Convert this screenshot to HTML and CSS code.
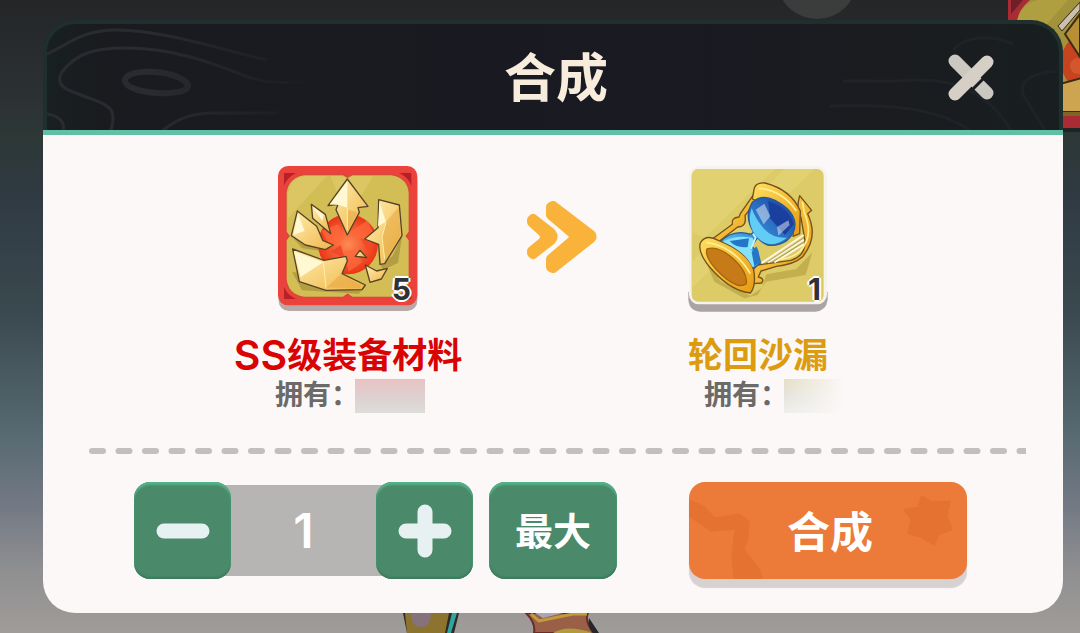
FILE: index.html
```html
<!DOCTYPE html>
<html lang="zh-CN">

<head>
    <meta charset="UTF-8">
    <meta name="viewport" content="width=device-width, initial-scale=1.0">
    <title>合成</title>
    <link rel="stylesheet" href="styles.css">
</head>

<body>
    <!-- Fondo del juego -->
    <div class="scene" aria-hidden="true">
        <div class="scene-lamp"></div>
        <svg class="scene-card" width="72" height="132" viewBox="0 0 72 132">
            <path fill="#1d2425" d="M0 0h72v132H0z" />
            <path fill="#a92b34" d="M0 0h72v128H0z" />
            <path fill="#6f1f27" d="M3 0h12L3 14z" />
            <path fill="#a3923c" d="M72 0H22Q10 10 9 22v84q8 8 20 10h43z" />
            <path fill="#b09f40" d="M9 22Q12 4 30 0h30L34 30z" />
            <circle cx="84" cy="62" r="31" fill="#c5431f" />
            <circle cx="70" cy="66" r="8" fill="#d4562c" />
            <path fill="#b98f35" stroke="#3b2a14" stroke-width="2" d="M57 34 72 14v43z" />
            <path fill="#c9c0b2" stroke="#3b2a14" stroke-width="1" d="M72 2 50 26l4 5L72 10z" />
            <path fill="#cda550" stroke="#3b2a14" stroke-width="2" d="M74 78 30 90l20 22h24z" />
            <path fill="#7d6526" d="M50 112h22v4H50z" />
        </svg>
        <svg class="scene-hero" width="200" height="20" viewBox="0 0 200 20">
            <path fill="#302b1e" d="M0 0h56l-5 20H4z" />
            <path fill="#8c7430" d="M2 0h44l-4 20H4z" />
            <path fill="#85727a" d="M8 0h20q0 14-10 14T8 0z" />
            <path fill="#2fa6a3" d="M49 0h5l-6 20h-4z" />
            <path fill="#9a6047" stroke="#6b2c26" stroke-width="2" d="M123 0h62q-4 8 6 20h-60q2-10-8-20z" />
            <path fill="#aaa6b9" d="M132 0h28l-20 5z" />
            <path fill="none" stroke="#c09b3c" stroke-width="3" d="m128 1 8 7 34-7h14" />
            <path fill="#b39a3d" d="M150 20q14-9 40 0z" />
            <path fill="#24262b" d="M186 5l10 15h-6q-6-6-4-15z" />
        </svg>
    </div>

    <main class="dialog">
        <header class="dialog-header">
            <svg class="contour contour-left" width="310" height="106" viewBox="0 0 310 106" aria-hidden="true">
                <defs>
                    <linearGradient id="fade" gradientUnits="userSpaceOnUse" x1="100" y1="0" x2="260" y2="0">
                        <stop offset="0" stop-color="#292b30" />
                        <stop offset="1" stop-color="#1b1c20" />
                    </linearGradient>
                </defs>
                <g fill="none" stroke="url(#fade)" stroke-width="3">
                    <path d="M0 30C22 20 34 6 70 6c42 0 92 16 150 30" />
                    <path d="M64 106c8-26-8-26-30-35C24 67 6 63 15 48 30 28 50 24 78 24c46 0 82 13 118 27 20 8 36 8 60 7" />
                    <path d="M0 90c12 2 18 8 16 16M116 106c16-12 30-18 56-17h60" />
                    <path stroke-width="6" d="M78 56c2-13 56-10 63 5 2 13-64 10-63-5z" />
                </g>
            </svg>
            <svg class="contour contour-right" width="240" height="106" viewBox="0 0 240 106" aria-hidden="true">
                <g fill="none" stroke="#1f2226" stroke-width="3">
                    <path d="M24 57h56c60-6 90 14 112 49M10 82c60-2 110 2 140 24" />
                    <path d="M134 26c12-14 36-16 60-6M238 47c-30 2-42 14-30 30l18 29" />
                </g>
            </svg>
            <h1>合成</h1>
            <button type="button" class="close" aria-label="关闭">
                <svg width="48" height="50" viewBox="0 0 48 50">
                    <g stroke-width="13" stroke-linecap="round">
                        <path stroke="#cbc7c1" d="M8 7l32 32" />
                        <path stroke="#1a1b20" stroke-width="3" stroke-linecap="butt" d="M25 36l12-12" />
                        <path stroke="#d5cfc6" d="M40 8 8 40" />
                    </g>
                </svg>
            </button>
        </header>

        <div class="dialog-body">
            <section class="recipe">
                <div class="item">
                    <div class="item-card">
                        <svg width="142" height="148" viewBox="39 30 426 444" aria-hidden="true">
                            <defs>
                                <linearGradient id="gold" x1="0" y1="0" x2="1" y2="1">
                                    <stop offset="0" stop-color="#fff0b0" />
                                    <stop offset="1" stop-color="#f0b54a" />
                                </linearGradient>
                                <radialGradient id="gem">
                                    <stop offset="0" stop-color="#ff8a52" />
                                    <stop offset="1" stop-color="#ea3517" />
                                </radialGradient>
                            </defs>
                            <rect x="44" y="50" width="416" height="418" rx="30" fill="#b5aaa8" />
                            <rect x="42" y="33" width="418" height="418" rx="30" fill="#ec423c" />
                            <path fill="#b62026" d="M60 54h36Q70 66 60 92zM442 54h-36q26 12 36 38zM60 432h36q-26-12-36-36zM442 432h-36q26-12 36-36z" />
                            <path fill="#d3bd55" stroke="#d64a37" stroke-width="4" d="M120 59h118l13 8 13-8h118q50 8 54 54v118l-9 12 9 12v118q-6 48-54 54H264l-13-9-13 9H120q-48-6-54-54V255l9-12-9-12V113q6-46 54-54z" />
                            <path fill="#dfcb69" d="M72 190V116q10-46 50-52h66zM200 64h34l16 8 14-8h64L250 190z" opacity=".7" />
                            <path fill="#93822f" opacity=".5" d="M88 250l120 30-8 12-86-12zM84 350l30 56 170 10 20-20zM350 332l36-30 28-58-12 80-44 20z" />
                            <circle cx="252" cy="268" r="90" fill="url(#gem)" />
                            <path fill="#ff6a3c" opacity=".7" d="M172 228l50-20 20 40-40 30zM260 230l50-34 20 40-32 24zM240 290l34-8 20 40-40 28z" />
                            <path fill="#f04a2a" d="M200 290l30-20 12 40zM290 250l34 10-10 34z" />
                            <g fill="url(#gold)" stroke="#594326" stroke-width="4" stroke-linejoin="round">
                                <path d="M250 72l62 82-30 4 4 14-36 68-34-76 6-16-30 4z" />
                                <path d="M142 148l42 30 16 58-54-46z" />
                                <path d="M100 168l58 46 18 42 32 14-24 14-60-14-42-28z" />
                                <path d="M86 282l94 34 66-12 4 14-16 38 70 34-10 14-108 2-80-26z" />
                                <path d="M344 134l62 16 8 92-52 84-14 2-4-60-42-16 40-34z" />
                                <path d="M288 286l20 22-16-2-18-2z" />
                                <path d="M304 330l34 18 32-8-18 32-34 10z" />
                            </g>
                            <path fill="#fff8d2" d="M250 78v80l-26-8-26-2zM90 290l88 32-68 44zM346 140l20 60-24 14zM102 176l20 52-34 12zM145 153l34 26-4 20z" />
                            <path fill="#e4a33c" d="M250 164l30 8-30 62zM186 398l46-42 60 36-6 6zM366 200l38-44 6 84-46 76-12-66z" opacity=".5" />
                            <path fill="none" stroke="#fff0a8" stroke-width="3" d="M250 158v68M178 322l8 76M366 202l-12 44 8 66" />
                        </svg>
                        <span class="badge">5</span>
                    </div>
                    <h2 class="item-name red"><span class="grade">SS</span>级装备材料</h2>
                    <p class="owned">拥有：<span class="owned-count pink"></span></p>
                </div>

                <svg class="arrow" width="72" height="72" viewBox="0 0 72 72" aria-hidden="true">
                    <g fill="#f9b33b" stroke="#f9b33b" stroke-width="10" stroke-linejoin="round">
                        <path d="M6 19l1-1 18 14q3 4 0 7L7 53l-1-1v-2l11-9q4-5 0-10L6 21z" />
                        <path d="M25 6l2-1 38 29q1 2 0 3L27 67l-2-1v-8l20-17q6-5 0-10L25 14z" />
                    </g>
                </svg>

                <div class="item item-result">
                    <div class="item-card">
                        <svg width="142" height="148" viewBox="48 30 426 444" aria-hidden="true">
                            <defs>
                                <linearGradient id="rim" x1="0" y1="0" x2="1" y2="1">
                                    <stop offset="0" stop-color="#ffdf5e" />
                                    <stop offset="1" stop-color="#e79a12" />
                                </linearGradient>
                                <linearGradient id="glass" x1="0" y1="1" x2="1" y2="0">
                                    <stop offset="0" stop-color="#8ceaff" />
                                    <stop offset=".4" stop-color="#3f9be6" />
                                    <stop offset="1" stop-color="#143c98" />
                                </linearGradient>
                            </defs>
                            <path fill="#aaa4a4" d="M52 410h418v24q-4 34-38 36H90q-36-2-38-36z" />
                            <rect x="54" y="34" width="414" height="414" rx="30" fill="#f6f2ec" />
                            <rect x="62" y="42" width="396" height="398" rx="20" fill="#dccb66" />
                            <path fill="#e5d676" d="M62 230V60q4-18 20-18h230L100 250zM340 42h90L62 400v-80z" opacity=".6" />
                            <path fill="#b39c3c" opacity=".6" d="M100 310l50 70 88 42 36-24 12-40 90-16 48-50-20 68-120 20-24 40-40 10-90-50z" />
                            <g stroke="#74501b" stroke-width="4" stroke-linejoin="round">
                                <path fill="url(#rim)" d="M254 110l-46 66-4 10q-24 2-20 22l-60 44 14 12 62-48q28 0 22-34l44-58z" />
                                <path fill="url(#rim)" d="M386 122l36 44-12 10q34 72-16 130-24 22-78 28l-46 14-8 18q20 4 10 18l-26 2-8-34 22-22 100-14q44-14 42-58l-12-70q-16-22-4-66z" />
                                <path fill="url(#rim)" d="M248 110q2-30 34-26 78 20 106 84l-2 68-20 8q6-64-122-112z" />
                                <path fill="url(#glass)" stroke="#2a5a94" d="M244 142q28-26 68-6 58 30 60 72 0 28-24 48-26 18-58 14-18-6-30-22l-18 24q24 28 26 52l-28 22q-30-60-96-82 40-44 96-26l8-6q-30-46-4-90z" />
                                <path fill="url(#rim)" d="M88 264q16-28 54-8 88 34 106 88 8 50-10 70-54-6-106-60-54-56-44-90z" />
                                <path fill="#c77a18" stroke="#a4640d" d="M108 282q34-12 82 32 40 38 36 72-24 20-76-28-52-50-42-76z" />
                            </g>
                            <path fill="#1b3f9e" d="M292 138q64 22 76 70l-26 32-46-52z" />
                            <path fill="#62cdf4" d="M242 160q-14 42 8 76 22 30 50 32 26-2 48-20-42 2-66-24-26-26-40-64z" />
                            <path fill="#84e3fb" d="M156 260q40-22 88-12l6 10-12 24q22 20 20 46l-14 8q-20-46-88-76z" />
                            <path fill="#2476c7" d="M176 258l58-8-4 26q-34 4-54-18zM242 292l14-18q12 20 10 48l-16 12z" />
                            <path fill="#fff" opacity=".45" d="M254 164l26-18 18 38-20 24zM318 216l34-20 4 14-34 32z" />
                            <path fill="none" stroke="#c9f6ff" stroke-width="5" d="M246 236l8 12-14 34" />
                            <path fill="none" stroke="#fff8e0" stroke-width="6" d="M272 324l126-84M290 322l108-68M310 322l88-54" />
                            <path fill="none" stroke="#8a7d5a" stroke-width="2" d="M278 328l122-80M300 324l98-62" />
                            <path fill="none" stroke="#ffef92" stroke-width="5" d="M264 100q70 6 112 68M106 262q84 12 132 94M394 140l6 34q30 70-14 116-24 20-66 24" />
                        </svg>
                        <span class="badge">1</span>
                    </div>
                    <h2 class="item-name amber">轮回沙漏</h2>
                    <p class="owned">拥有：<span class="owned-count cream"></span></p>
                </div>
            </section>

            <svg class="divider" height="6" aria-hidden="true">
                <line x1="3" y1="3" x2="100%" y2="3" pathLength="1868" stroke="#c3bfbf" stroke-width="6" stroke-linecap="round" stroke-dasharray="22 31" />
            </svg>

            <form class="controls">
                <div class="stepper">
                    <button type="button" class="green" id="minus" aria-label="减少">
                        <svg width="54" height="54" viewBox="0 0 54 54">
                            <path stroke="#e8f1f1" stroke-width="15" stroke-linecap="round" d="M8 27h38" />
                        </svg>
                    </button>
                    <input type="text" id="amount" value="1" inputmode="numeric" aria-label="数量">
                    <button type="button" class="green" id="plus" aria-label="增加">
                        <svg width="54" height="54" viewBox="0 0 54 54">
                            <path stroke="#e8f1f1" stroke-width="15" stroke-linecap="round" d="M8 27h38M27 8v38" />
                        </svg>
                    </button>
                </div>
                <button type="button" class="green max" id="max">最大</button>
                <button type="submit" class="craft">
                    <svg class="craft-art" width="278" height="97" viewBox="0 0 278 97" aria-hidden="true">
                        <g fill="#e57230" stroke="#e57230" stroke-width="3" stroke-linejoin="round">
                            <path d="M0 19l14 6 12 12 24-4 9 7-1 16-4 12 16 20 2 8H46l-2-20 2-22 2-8-26 2L0 33z" />
                            <path d="M233 15l10 6 17-1-3 14 5 13-13 5-4 10-13-8-12-3 3-14-7-9 14-2z" />
                        </g>
                    </svg>
                    <span>合成</span>
                </button>
            </form>
        </div>
    </main>

    <script>
        const amount = document.getElementById('amount');
        const maximo = 99;

        function cambiar(n) {
            amount.value = Math.min(maximo, Math.max(1, n));
        }

        document.getElementById('minus').addEventListener('click', () => cambiar(Number(amount.value) - 1));
        document.getElementById('plus').addEventListener('click', () => cambiar(Number(amount.value) + 1));
        document.getElementById('max').addEventListener('click', () => cambiar(maximo));
        document.querySelector('.controls').addEventListener('submit', e => e.preventDefault());
    </script>
</body>

</html>
```
FILE: styles.css
```css
* {
    box-sizing: border-box;
}

body {
    margin: 0;
    min-height: 100vh;
    display: flow-root;
    position: relative;
    overflow-x: hidden;
    font-family: "Liberation Sans", "Noto Sans CJK SC", sans-serif;
    background: linear-gradient(#242628 0%, #2b3032 14%, #2d3837 22%, #2f3941 30%, #3b4a50 50%, #566970 68%, #737984 80%, #8f8f91 90%, #a09c99 100%);
}

h1,
h2,
p {
    margin: 0;
}

button {
    padding: 0;
    border: none;
    font-family: inherit;
    font-weight: bold;
    color: white;
    cursor: pointer;
}

button svg {
    display: block;
    fill: none;
}

/* Fondo */
.scene {
    position: absolute;
    inset: 0;
    overflow: hidden;
}

.scene-lamp {
    position: absolute;
    top: -60px;
    left: 777px;
    width: 80px;
    height: 79px;
    border-radius: 50%;
    background: #3b3c3c;
}

.scene-card {
    position: absolute;
    top: 0;
    right: 0;
}

.scene-hero {
    position: absolute;
    bottom: 0;
    left: 403px;
}

/* Ventana */
.dialog {
    position: relative;
    margin: 20px 17px 20px 43px;
}

.dialog-header {
    position: relative;
    display: grid;
    grid-template-columns: 1fr auto 1fr;
    align-items: center;
    height: 110px;
    padding: 4px 64px 0 70px;
    border: 4px solid #1e2f2d;
    border-bottom: none;
    border-radius: 32px 32px 0 0;
    background: linear-gradient(to right, #182020 0, #1a1b1f 5%, #191a22 60%, #1a1c1f 85%, #181f20 100%);
}

.dialog-header h1 {
    grid-column: 2;
    position: relative;
    font-size: 52px;
    line-height: 60px;
    color: #f8ecdc;
}

.contour {
    position: absolute;
    top: 0;
}

.contour-left {
    left: 0;
}

.contour-right {
    right: 0;
}

.close {
    position: relative;
    justify-self: end;
    background: none;
}

.dialog-body {
    padding: 30px 0 34px;
    border-top: 5px solid #62bfa7;
    border-radius: 0 0 32px 32px;
    background: #fbf8f7;
}

.recipe {
    display: grid;
    grid-template-columns: 240px 170px 240px;
    justify-content: center;
    align-items: start;
}

.item {
    display: flex;
    flex-direction: column;
    align-items: center;
}

.item-card {
    position: relative;
    margin-bottom: 23px;
}

.item-card svg {
    display: block;
}

.badge {
    position: absolute;
    right: 8px;
    bottom: 8px;
    font-family: Inter, sans-serif;
    font-size: 30px;
    line-height: 32px;
    font-weight: bold;
    color: #2f3136;
    text-shadow: 0 0 2px white, 2px 0 0 white, -2px 0 0 white, 0 2px 0 white, 0 -2px 0 white;
}

.item-name {
    display: flex;
    align-items: center;
    font-size: 35px;
    line-height: 40px;
    white-space: nowrap;
}

.grade {
    padding-bottom: 2px;
    font-family: Inter, sans-serif;
    font-size: 41px;
    font-weight: 600;
    line-height: 38px;
}

.red {
    color: #d90303;
}

.amber {
    color: #dd9b10;
}

.owned {
    display: flex;
    align-items: flex-end;
    height: 37px;
    padding-left: 4px;
    font-size: 28px;
    line-height: 34px;
    font-weight: bold;
    color: #6b6a69;
}

.item-result .owned {
    padding-left: 32px;
}

.owned-count {
    width: 70px;
    height: 34px;
    margin-left: -4px;
}

.pink {
    background: linear-gradient(#e9c2c3, #dcd2d1 60%, #dedddc);
}

.cream {
    width: 60px;
    background: linear-gradient(to right, transparent, #fbf8f7), linear-gradient(#e5dfc4, #e6e4dc 50%, #efeeea);
}

.arrow {
    justify-self: center;
    margin: 36px 0 0 18px;
}

.divider {
    display: block;
    width: calc(100% - 83px);
    margin: 35px 37px 28px 46px;
}

/* Controles */
.controls {
    display: flex;
    justify-content: center;
    padding-right: 5px;
}

.stepper {
    display: flex;
    align-items: center;
    margin-right: 16px;
}

.stepper input {
    width: 165px;
    height: 91px;
    margin: 0 -10px;
    padding: 0;
    border: none;
    border-radius: 0;
    background: #b6b5b3;
    color: white;
    font-family: Inter, sans-serif;
    font-size: 48px;
    font-weight: 600;
    text-align: center;
}

.green {
    position: relative;
    display: flex;
    justify-content: center;
    align-items: center;
    width: 97px;
    height: 97px;
    border-radius: 16px;
    background: #4a8a6b;
    box-shadow: inset 0 3px 2px #52b28a, inset 0 -2px 2px #3b7a5e;
}

.max {
    width: 128px;
    margin-right: 72px;
    padding-bottom: 4px;
    font-size: 38px;
}

.craft {
    position: relative;
    width: 278px;
    height: 97px;
    padding: 0 0 4px 4px;
    border-radius: 16px;
    background: #ec7a39;
    box-shadow: 0 9px 1px #d8d1d1;
    font-size: 43px;
}

.craft-art {
    position: absolute;
    top: 0;
    left: 0;
}

.craft span {
    position: relative;
}
```
